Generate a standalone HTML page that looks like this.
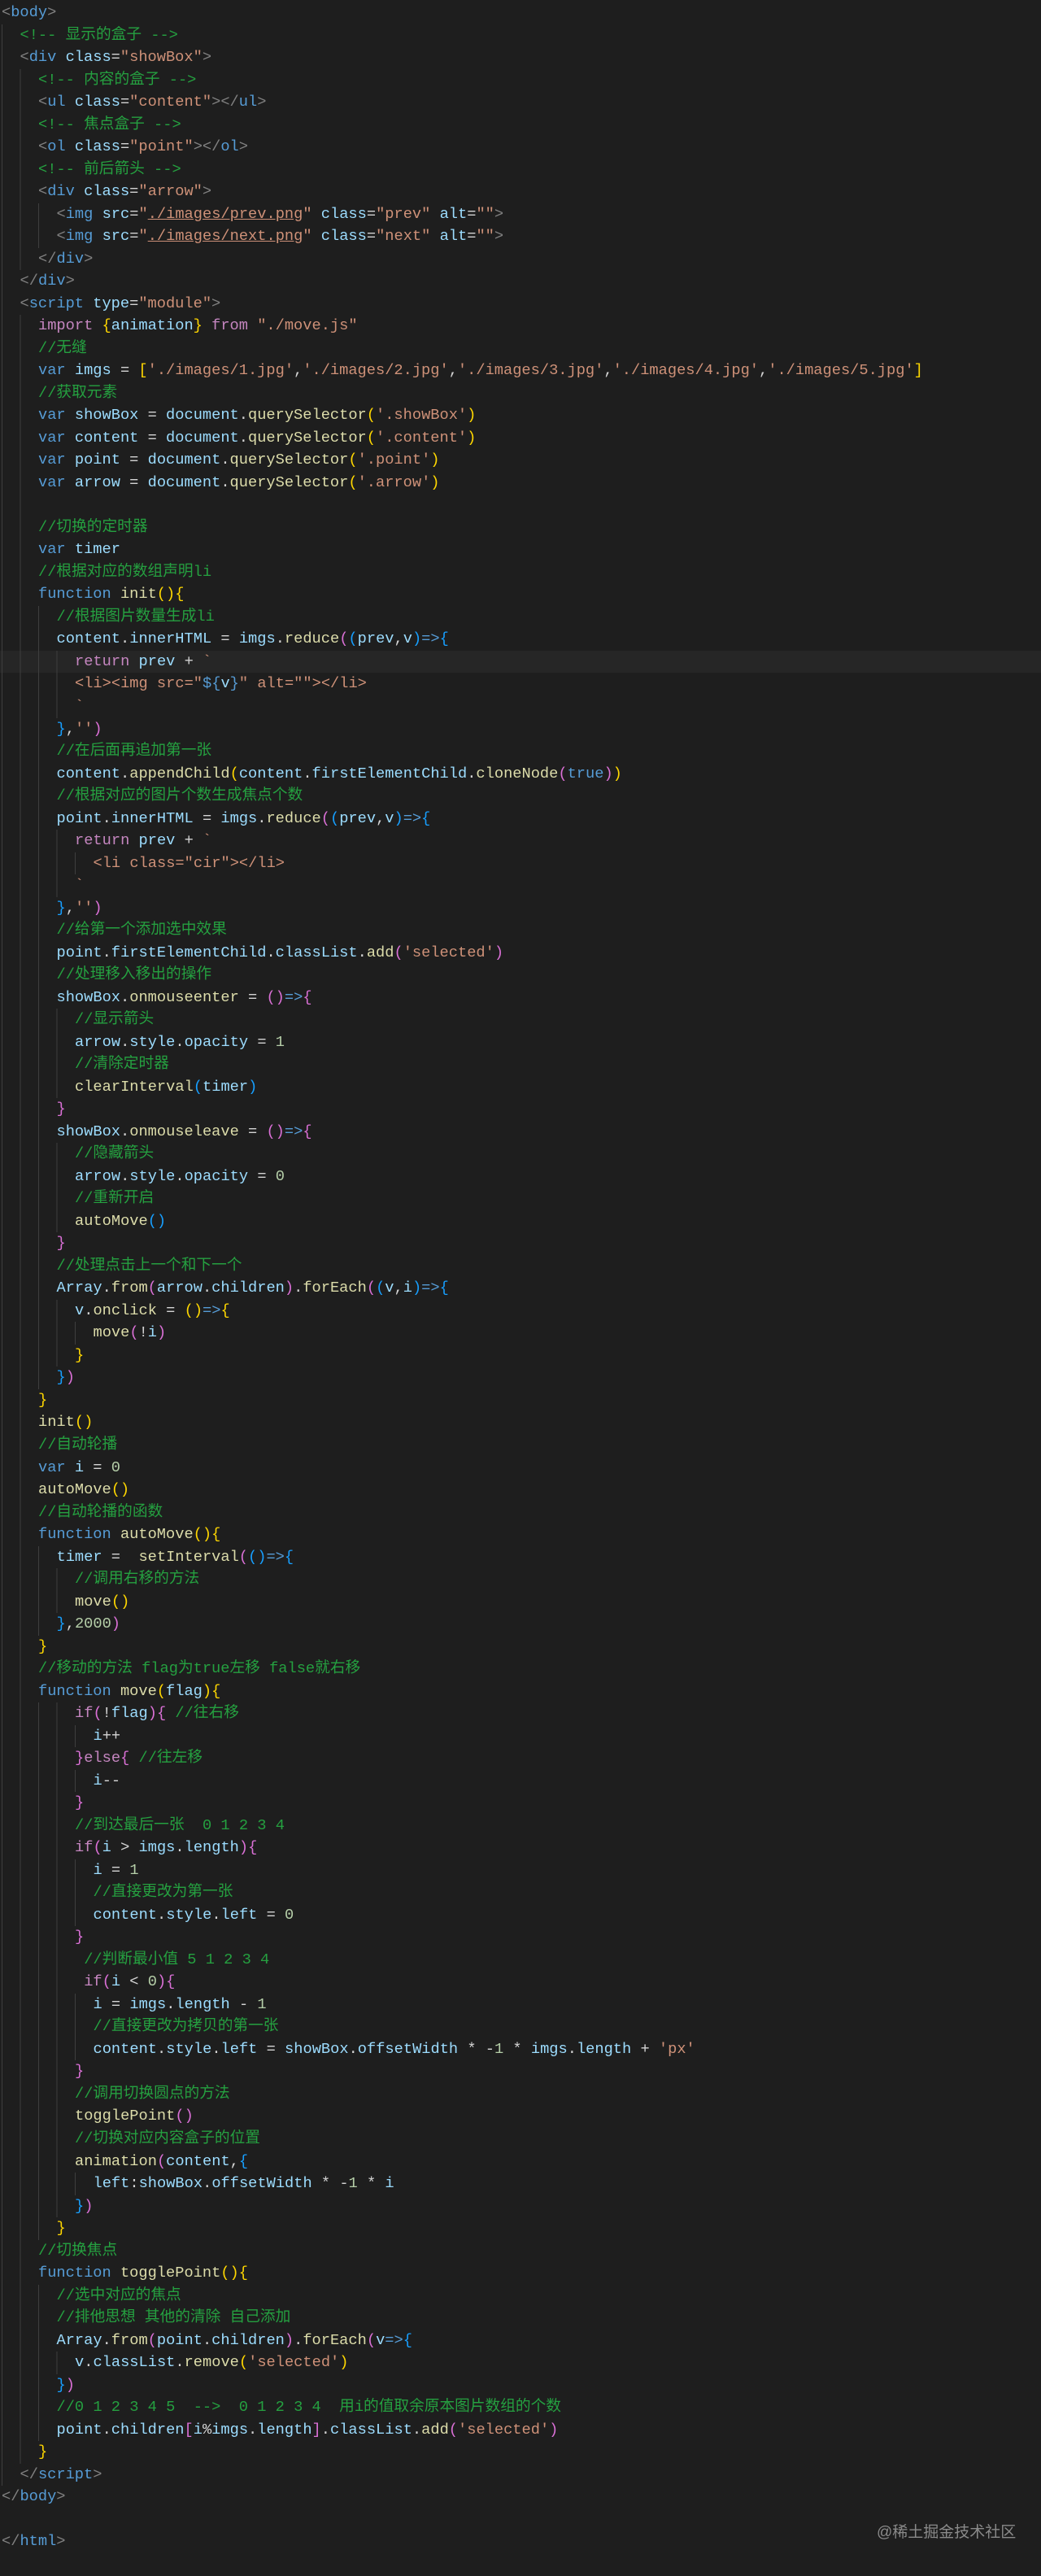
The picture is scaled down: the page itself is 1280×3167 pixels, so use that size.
<!DOCTYPE html>
<html><head><meta charset="utf-8"><style>
html,body{margin:0;padding:0;background:#1e1e1e}
body{width:1280px;height:3167px;overflow:hidden;position:relative;font-family:"Liberation Mono","Noto Sans CJK SC",monospace;font-size:18.7px;color:#d4d4d4}
.w{padding-top:2px}
.l{height:27.53px;line-height:27.53px;white-space:pre;padding-left:calc(var(--i,0)*22.5px + 2px);background:repeating-linear-gradient(90deg,#3e3e3e 0 1px,transparent 1px 22.5px) 2px 0/calc(var(--i,0)*22.5px) 100% no-repeat}
.c{color:#25a040}.k{color:#569cd6}.r{color:#c586c0}.v{color:#9cdcfe}.f{color:#dcdcaa}.s{color:#ce9178}.n{color:#b5cea8}
.t{color:#569cd6}.g{color:#808080}.u{text-decoration:underline}
.b1{color:#ffd700}.b2{color:#da70d6}.b3{color:#179fff}
.wm{position:absolute;left:1078px;top:3098px;color:#8a8a8a;font-family:"Liberation Sans","Noto Sans CJK SC",sans-serif;font-size:19px}
</style></head><body><div class="w">
<div class="l"><span class="g">&lt;</span><span class="t">body</span><span class="g">&gt;</span></div>
<div class="l" style="--i:1"><span class="c">&lt;!-- 显示的盒子 --&gt;</span></div>
<div class="l" style="--i:1"><span class="g">&lt;</span><span class="t">div</span> <span class="v">class</span>=<span class="s">"showBox"</span><span class="g">&gt;</span></div>
<div class="l" style="--i:2"><span class="c">&lt;!-- 内容的盒子 --&gt;</span></div>
<div class="l" style="--i:2"><span class="g">&lt;</span><span class="t">ul</span> <span class="v">class</span>=<span class="s">"content"</span><span class="g">&gt;&lt;/</span><span class="t">ul</span><span class="g">&gt;</span></div>
<div class="l" style="--i:2"><span class="c">&lt;!-- 焦点盒子 --&gt;</span></div>
<div class="l" style="--i:2"><span class="g">&lt;</span><span class="t">ol</span> <span class="v">class</span>=<span class="s">"point"</span><span class="g">&gt;&lt;/</span><span class="t">ol</span><span class="g">&gt;</span></div>
<div class="l" style="--i:2"><span class="c">&lt;!-- 前后箭头 --&gt;</span></div>
<div class="l" style="--i:2"><span class="g">&lt;</span><span class="t">div</span> <span class="v">class</span>=<span class="s">"arrow"</span><span class="g">&gt;</span></div>
<div class="l" style="--i:3"><span class="g">&lt;</span><span class="t">img</span> <span class="v">src</span>=<span class="s">"<span class="u">./images/prev.png</span>"</span> <span class="v">class</span>=<span class="s">"prev"</span> <span class="v">alt</span>=<span class="s">""</span><span class="g">&gt;</span></div>
<div class="l" style="--i:3"><span class="g">&lt;</span><span class="t">img</span> <span class="v">src</span>=<span class="s">"<span class="u">./images/next.png</span>"</span> <span class="v">class</span>=<span class="s">"next"</span> <span class="v">alt</span>=<span class="s">""</span><span class="g">&gt;</span></div>
<div class="l" style="--i:2"><span class="g">&lt;/</span><span class="t">div</span><span class="g">&gt;</span></div>
<div class="l" style="--i:1"><span class="g">&lt;/</span><span class="t">div</span><span class="g">&gt;</span></div>
<div class="l" style="--i:1"><span class="g">&lt;</span><span class="t">script</span> <span class="v">type</span>=<span class="s">"module"</span><span class="g">&gt;</span></div>
<div class="l" style="--i:2"><span class="r">import</span> <span class="b1">{</span><span class="v">animation</span><span class="b1">}</span> <span class="r">from</span> <span class="s">"./move.js"</span></div>
<div class="l" style="--i:2"><span class="c">//无缝</span></div>
<div class="l" style="--i:2"><span class="k">var</span> <span class="v">imgs</span> = <span class="b1">[</span><span class="s">'./images/1.jpg'</span>,<span class="s">'./images/2.jpg'</span>,<span class="s">'./images/3.jpg'</span>,<span class="s">'./images/4.jpg'</span>,<span class="s">'./images/5.jpg'</span><span class="b1">]</span></div>
<div class="l" style="--i:2"><span class="c">//获取元素</span></div>
<div class="l" style="--i:2"><span class="k">var</span> <span class="v">showBox</span> = <span class="v">document</span>.<span class="f">querySelector</span><span class="b1">(</span><span class="s">'.showBox'</span><span class="b1">)</span></div>
<div class="l" style="--i:2"><span class="k">var</span> <span class="v">content</span> = <span class="v">document</span>.<span class="f">querySelector</span><span class="b1">(</span><span class="s">'.content'</span><span class="b1">)</span></div>
<div class="l" style="--i:2"><span class="k">var</span> <span class="v">point</span> = <span class="v">document</span>.<span class="f">querySelector</span><span class="b1">(</span><span class="s">'.point'</span><span class="b1">)</span></div>
<div class="l" style="--i:2"><span class="k">var</span> <span class="v">arrow</span> = <span class="v">document</span>.<span class="f">querySelector</span><span class="b1">(</span><span class="s">'.arrow'</span><span class="b1">)</span></div>
<div class="l" style="--i:2"> </div>
<div class="l" style="--i:2"><span class="c">//切换的定时器</span></div>
<div class="l" style="--i:2"><span class="k">var</span> <span class="v">timer</span></div>
<div class="l" style="--i:2"><span class="c">//根据对应的数组声明li</span></div>
<div class="l" style="--i:2"><span class="k">function</span> <span class="f">init</span><span class="b1">(){</span></div>
<div class="l" style="--i:3"><span class="c">//根据图片数量生成li</span></div>
<div class="l" style="--i:3"><span class="v">content</span>.<span class="v">innerHTML</span> = <span class="v">imgs</span>.<span class="f">reduce</span><span class="b2">(</span><span class="b3">(</span><span class="v">prev</span>,<span class="v">v</span><span class="b3">)</span><span class="k">=&gt;</span><span class="b3">{</span></div>
<div class="l" style="--i:4;background-color:#262626"><span class="r">return</span> <span class="v">prev</span> + <span class="s">`</span></div>
<div class="l" style="--i:4"><span class="s">&lt;li&gt;&lt;img src="</span><span class="k">${</span><span class="v">v</span><span class="k">}</span><span class="s">" alt=""&gt;&lt;/li&gt;</span></div>
<div class="l" style="--i:4"><span class="s">`</span></div>
<div class="l" style="--i:3"><span class="b3">}</span>,<span class="s">''</span><span class="b2">)</span></div>
<div class="l" style="--i:3"><span class="c">//在后面再追加第一张</span></div>
<div class="l" style="--i:3"><span class="v">content</span>.<span class="f">appendChild</span><span class="b1">(</span><span class="v">content</span>.<span class="v">firstElementChild</span>.<span class="f">cloneNode</span><span class="b2">(</span><span class="k">true</span><span class="b2">)</span><span class="b1">)</span></div>
<div class="l" style="--i:3"><span class="c">//根据对应的图片个数生成焦点个数</span></div>
<div class="l" style="--i:3"><span class="v">point</span>.<span class="v">innerHTML</span> = <span class="v">imgs</span>.<span class="f">reduce</span><span class="b2">(</span><span class="b3">(</span><span class="v">prev</span>,<span class="v">v</span><span class="b3">)</span><span class="k">=&gt;</span><span class="b3">{</span></div>
<div class="l" style="--i:4"><span class="r">return</span> <span class="v">prev</span> + <span class="s">`</span></div>
<div class="l" style="--i:5"><span class="s">&lt;li class="cir"&gt;&lt;/li&gt;</span></div>
<div class="l" style="--i:4"><span class="s">`</span></div>
<div class="l" style="--i:3"><span class="b3">}</span>,<span class="s">''</span><span class="b2">)</span></div>
<div class="l" style="--i:3"><span class="c">//给第一个添加选中效果</span></div>
<div class="l" style="--i:3"><span class="v">point</span>.<span class="v">firstElementChild</span>.<span class="v">classList</span>.<span class="f">add</span><span class="b2">(</span><span class="s">'selected'</span><span class="b2">)</span></div>
<div class="l" style="--i:3"><span class="c">//处理移入移出的操作</span></div>
<div class="l" style="--i:3"><span class="v">showBox</span>.<span class="f">onmouseenter</span> = <span class="b2">()</span><span class="k">=&gt;</span><span class="b2">{</span></div>
<div class="l" style="--i:4"><span class="c">//显示箭头</span></div>
<div class="l" style="--i:4"><span class="v">arrow</span>.<span class="v">style</span>.<span class="v">opacity</span> = <span class="n">1</span></div>
<div class="l" style="--i:4"><span class="c">//清除定时器</span></div>
<div class="l" style="--i:4"><span class="f">clearInterval</span><span class="b3">(</span><span class="v">timer</span><span class="b3">)</span></div>
<div class="l" style="--i:3"><span class="b2">}</span></div>
<div class="l" style="--i:3"><span class="v">showBox</span>.<span class="f">onmouseleave</span> = <span class="b2">()</span><span class="k">=&gt;</span><span class="b2">{</span></div>
<div class="l" style="--i:4"><span class="c">//隐藏箭头</span></div>
<div class="l" style="--i:4"><span class="v">arrow</span>.<span class="v">style</span>.<span class="v">opacity</span> = <span class="n">0</span></div>
<div class="l" style="--i:4"><span class="c">//重新开启</span></div>
<div class="l" style="--i:4"><span class="f">autoMove</span><span class="b3">()</span></div>
<div class="l" style="--i:3"><span class="b2">}</span></div>
<div class="l" style="--i:3"><span class="c">//处理点击上一个和下一个</span></div>
<div class="l" style="--i:3"><span class="v">Array</span>.<span class="f">from</span><span class="b2">(</span><span class="v">arrow</span>.<span class="v">children</span><span class="b2">)</span>.<span class="f">forEach</span><span class="b2">(</span><span class="b3">(</span><span class="v">v</span>,<span class="v">i</span><span class="b3">)</span><span class="k">=&gt;</span><span class="b3">{</span></div>
<div class="l" style="--i:4"><span class="v">v</span>.<span class="f">onclick</span> = <span class="b1">()</span><span class="k">=&gt;</span><span class="b1">{</span></div>
<div class="l" style="--i:5"><span class="f">move</span><span class="b2">(</span>!<span class="v">i</span><span class="b2">)</span></div>
<div class="l" style="--i:4"><span class="b1">}</span></div>
<div class="l" style="--i:3"><span class="b3">}</span><span class="b2">)</span></div>
<div class="l" style="--i:2"><span class="b1">}</span></div>
<div class="l" style="--i:2"><span class="f">init</span><span class="b1">()</span></div>
<div class="l" style="--i:2"><span class="c">//自动轮播</span></div>
<div class="l" style="--i:2"><span class="k">var</span> <span class="v">i</span> = <span class="n">0</span></div>
<div class="l" style="--i:2"><span class="f">autoMove</span><span class="b1">()</span></div>
<div class="l" style="--i:2"><span class="c">//自动轮播的函数</span></div>
<div class="l" style="--i:2"><span class="k">function</span> <span class="f">autoMove</span><span class="b1">(){</span></div>
<div class="l" style="--i:3"><span class="v">timer</span> =  <span class="f">setInterval</span><span class="b2">(</span><span class="b3">()</span><span class="k">=&gt;</span><span class="b3">{</span></div>
<div class="l" style="--i:4"><span class="c">//调用右移的方法</span></div>
<div class="l" style="--i:4"><span class="f">move</span><span class="b1">()</span></div>
<div class="l" style="--i:3"><span class="b3">}</span>,<span class="n">2000</span><span class="b2">)</span></div>
<div class="l" style="--i:2"><span class="b1">}</span></div>
<div class="l" style="--i:2"><span class="c">//移动的方法 flag为true左移 false就右移</span></div>
<div class="l" style="--i:2"><span class="k">function</span> <span class="f">move</span><span class="b1">(</span><span class="v">flag</span><span class="b1">){</span></div>
<div class="l" style="--i:4"><span class="r">if</span><span class="b2">(</span>!<span class="v">flag</span><span class="b2">){</span> <span class="c">//往右移</span></div>
<div class="l" style="--i:5"><span class="v">i</span>++</div>
<div class="l" style="--i:4"><span class="b2">}</span><span class="r">else</span><span class="b2">{</span> <span class="c">//往左移</span></div>
<div class="l" style="--i:5"><span class="v">i</span>--</div>
<div class="l" style="--i:4"><span class="b2">}</span></div>
<div class="l" style="--i:4"><span class="c">//到达最后一张  0 1 2 3 4</span></div>
<div class="l" style="--i:4"><span class="r">if</span><span class="b2">(</span><span class="v">i</span> &gt; <span class="v">imgs</span>.<span class="v">length</span><span class="b2">){</span></div>
<div class="l" style="--i:5"><span class="v">i</span> = <span class="n">1</span></div>
<div class="l" style="--i:5"><span class="c">//直接更改为第一张</span></div>
<div class="l" style="--i:5"><span class="v">content</span>.<span class="v">style</span>.<span class="v">left</span> = <span class="n">0</span></div>
<div class="l" style="--i:4"><span class="b2">}</span></div>
<div class="l" style="--i:4"> <span class="c">//判断最小值 5 1 2 3 4</span></div>
<div class="l" style="--i:4"> <span class="r">if</span><span class="b2">(</span><span class="v">i</span> &lt; <span class="n">0</span><span class="b2">){</span></div>
<div class="l" style="--i:5"><span class="v">i</span> = <span class="v">imgs</span>.<span class="v">length</span> - <span class="n">1</span></div>
<div class="l" style="--i:5"><span class="c">//直接更改为拷贝的第一张</span></div>
<div class="l" style="--i:5"><span class="v">content</span>.<span class="v">style</span>.<span class="v">left</span> = <span class="v">showBox</span>.<span class="v">offsetWidth</span> * -<span class="n">1</span> * <span class="v">imgs</span>.<span class="v">length</span> + <span class="s">'px'</span></div>
<div class="l" style="--i:4"><span class="b2">}</span></div>
<div class="l" style="--i:4"><span class="c">//调用切换圆点的方法</span></div>
<div class="l" style="--i:4"><span class="f">togglePoint</span><span class="b2">()</span></div>
<div class="l" style="--i:4"><span class="c">//切换对应内容盒子的位置</span></div>
<div class="l" style="--i:4"><span class="f">animation</span><span class="b2">(</span><span class="v">content</span>,<span class="b3">{</span></div>
<div class="l" style="--i:5"><span class="v">left</span>:<span class="v">showBox</span>.<span class="v">offsetWidth</span> * -<span class="n">1</span> * <span class="v">i</span></div>
<div class="l" style="--i:4"><span class="b3">}</span><span class="b2">)</span></div>
<div class="l" style="--i:3"><span class="b1">}</span></div>
<div class="l" style="--i:2"><span class="c">//切换焦点</span></div>
<div class="l" style="--i:2"><span class="k">function</span> <span class="f">togglePoint</span><span class="b1">(){</span></div>
<div class="l" style="--i:3"><span class="c">//选中对应的焦点</span></div>
<div class="l" style="--i:3"><span class="c">//排他思想 其他的清除 自己添加</span></div>
<div class="l" style="--i:3"><span class="v">Array</span>.<span class="f">from</span><span class="b2">(</span><span class="v">point</span>.<span class="v">children</span><span class="b2">)</span>.<span class="f">forEach</span><span class="b2">(</span><span class="v">v</span><span class="k">=&gt;</span><span class="b3">{</span></div>
<div class="l" style="--i:4"><span class="v">v</span>.<span class="v">classList</span>.<span class="f">remove</span><span class="b1">(</span><span class="s">'selected'</span><span class="b1">)</span></div>
<div class="l" style="--i:3"><span class="b3">}</span><span class="b2">)</span></div>
<div class="l" style="--i:3"><span class="c">//0 1 2 3 4 5  --&gt;  0 1 2 3 4  用i的值取余原本图片数组的个数</span></div>
<div class="l" style="--i:3"><span class="v">point</span>.<span class="v">children</span><span class="b2">[</span><span class="v">i</span>%<span class="v">imgs</span>.<span class="v">length</span><span class="b2">]</span>.<span class="v">classList</span>.<span class="f">add</span><span class="b2">(</span><span class="s">'selected'</span><span class="b2">)</span></div>
<div class="l" style="--i:2"><span class="b1">}</span></div>
<div class="l" style="--i:1"><span class="g">&lt;/</span><span class="t">script</span><span class="g">&gt;</span></div>
<div class="l"><span class="g">&lt;/</span><span class="t">body</span><span class="g">&gt;</span></div>
<div class="l"> </div>
<div class="l"><span class="g">&lt;/</span><span class="t">html</span><span class="g">&gt;</span></div>
</div>
<div class="wm">@稀土掘金技术社区</div>
</body></html>
